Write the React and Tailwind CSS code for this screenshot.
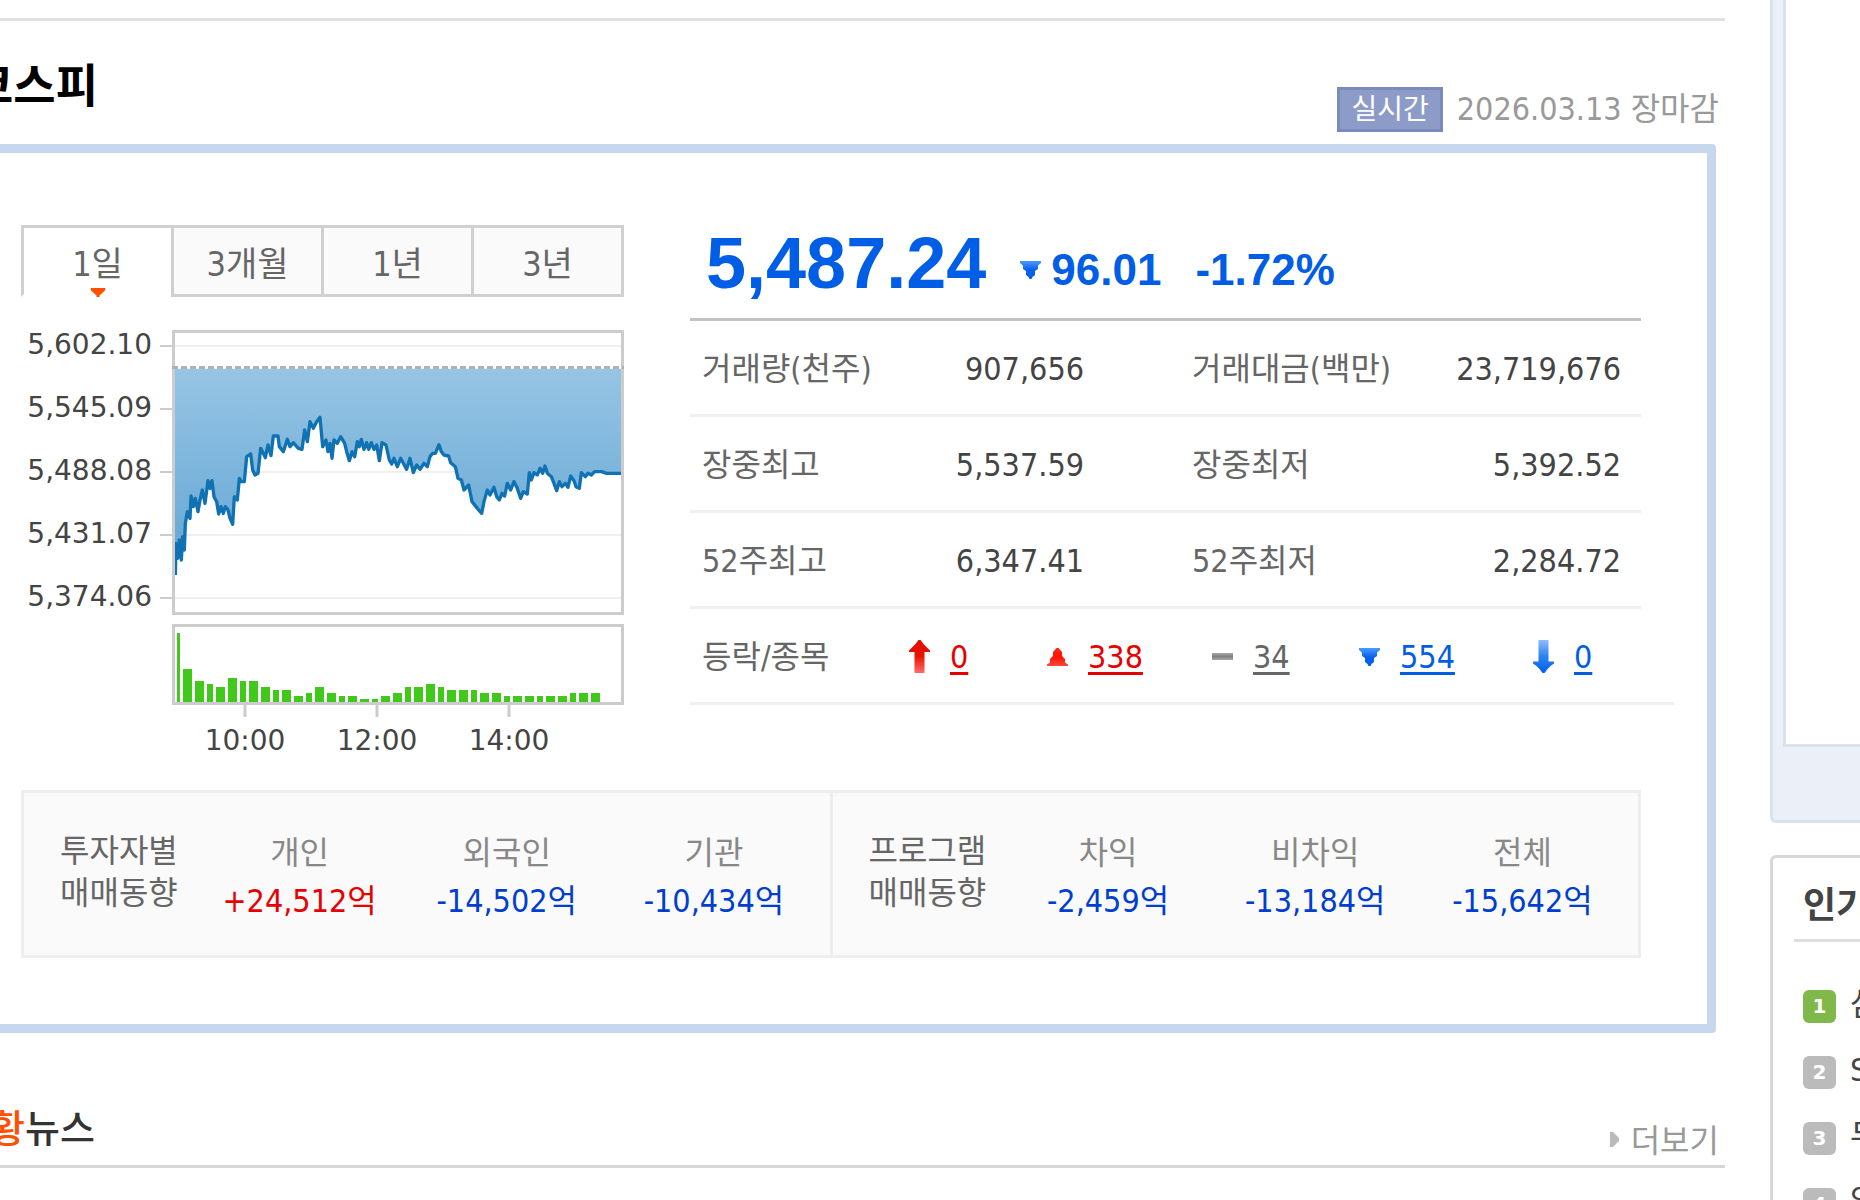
import React from 'react';

const periods = ['1일', '3개월', '1년', '3년'];

const quoteRows = [
  ['거래량(천주)', '907,656', '거래대금(백만)', '23,719,676'],
  ['장중최고', '5,537.59', '장중최저', '5,392.52'],
  ['52주최고', '6,347.41', '52주최저', '2,284.72']
];

const breadth = [
  { id: 'upper', label: '상한', count: '0', color: 'text-[#e60000]' },
  { id: 'up', label: '상승', count: '338', color: 'text-[#e60000]' },
  { id: 'flat', label: '보합', count: '34', color: 'text-[#666666]' },
  { id: 'down', label: '하락', count: '554', color: 'text-[#005de6]' },
  { id: 'lower', label: '하한', count: '0', color: 'text-[#005de6]' }
];

const trends = [
  {
    title: ['투자자별', '매매동향'],
    items: [
      ['개인', '+24,512억'],
      ['외국인', '-14,502억'],
      ['기관', '-10,434억']
    ]
  },
  {
    title: ['프로그램', '매매동향'],
    items: [
      ['차익', '-2,459억'],
      ['비차익', '-13,184억'],
      ['전체', '-15,642억']
    ]
  }
];

const popular = ['삼성전자', 'SK하이닉스', '두산에너빌리티', '알테오젠'];

const yLabels = ['5,602.10', '5,545.09', '5,488.08', '5,431.07', '5,374.06'];
const xLabels = [
  ['10:00', 224],
  ['12:00', 356],
  ['14:00', 488]
];

// Intraday price line, in thirds of a pixel
const line =
  '526,795 528,700 533,745 538,690 544,750 548,680 553,720 556,640 562,605 570,625 573,558 580,590 586,565 594,605 600,570 607,540 615,580 624,512 630,535 636,512 642,560 650,575 656,612 663,590 670,610 676,590 684,600 690,625 698,643 703,560 712,570 718,505 724,515 733,515 740,440 752,432 758,480 765,495 774,490 782,415 790,430 796,443 804,405 813,437 820,378 834,378 838,410 850,425 862,388 870,410 880,398 895,415 906,418 914,360 922,395 930,335 940,355 950,335 960,322 968,410 978,390 984,425 990,400 996,445 1002,390 1012,400 1022,380 1034,400 1040,425 1048,452 1056,425 1064,440 1072,395 1078,410 1084,388 1092,418 1100,398 1106,418 1114,398 1122,418 1130,405 1138,452 1146,398 1158,405 1168,450 1175,462 1182,445 1192,470 1202,445 1210,460 1220,478 1230,445 1240,488 1250,465 1260,478 1272,460 1282,470 1290,440 1298,430 1306,430 1317,404 1324,425 1332,435 1346,438 1352,458 1366,470 1374,505 1384,510 1392,540 1406,525 1416,575 1428,590 1436,600 1445,610 1452,575 1462,540 1470,555 1482,532 1490,560 1498,570 1506,550 1514,558 1522,520 1532,540 1542,515 1550,530 1562,565 1570,545 1582,552 1588,488 1594,510 1602,488 1612,495 1620,475 1628,490 1635,468 1642,490 1654,500 1662,520 1670,542 1678,515 1686,530 1696,520 1704,532 1712,498 1722,512 1728,530 1738,535 1744,488 1756,500 1764,490 1774,495 1784,485 1804,485 1820,490 1864,490';

const volumes = [
  11, 7, 6, 5, 8, 7, 7, 5, 4, 4, 2, 3, 5, 3, 2, 2, 1, 1, 2, 3, 5, 5, 6, 5, 4, 4, 4, 3, 3, 2, 2, 2, 2, 2, 2, 3, 3, 3
];
const barOffset = [0, 12, 24];
const barWidth = [9, 9, 6];

const Mark = ({ type, id }) => {
  const shapes = {
    upper: { h: 33, d: 'M9.500 0h2l3 4 3 3 3.500 3.500V12h-5.500v21h-10V12H0v-1.500L3.500 7l3-3z', from: '#e60a00', mid: '#e81500', to: '#ff6b6b' },
    up: { h: 18, d: 'M9.500 0h2l3.500 4v4l3 3v3.500l3 2V18H0v-1.500l3-2V11l3-3V4z', from: '#ff2a10', mid: '#ff1200', to: '#ff4a40' },
    flat: { h: 7, d: 'M0 0h21v7H0z', from: '#a8a8a8', mid: '#808080', to: '#a8a8a8' },
    down: { h: 18, d: 'M0 0h21v2l-3 2.500V8l-3 2v4l-2.500 2-1 2h-2l-1-2L6 14v-4L3 8V4.500L0 2z', from: '#4a9bff', mid: '#0a60ea', to: '#0060f0' },
    lower: { h: 33, d: 'M5.500 0h10v21.500H21v2L17.500 26l-3 3-3 4h-2l-3-4-3-3L0 23.500v-2h5.500z', from: '#8fbcff', mid: '#2c82f2', to: '#0060ea' }
  };
  const s = shapes[type];

  return (
    <svg viewBox={`0 0 21 ${s.h}`} width="21" height={s.h} aria-hidden="true" className="shrink-0">
      <defs>
        <linearGradient id={id} x1="0" y1="0" x2="0" y2="1">
          <stop offset="0" stopColor={s.from} />
          <stop offset="0.5" stopColor={s.mid} />
          <stop offset="1" stopColor={s.to} />
        </linearGradient>
      </defs>
      <path d={s.d} fill={`url(#${id})`} />
    </svg>
  );
};

const IndexChart = () => (
  <svg viewBox="0 0 603 450" role="img" aria-label="코스피 1일 차트" className="mt-[14px] block w-full">
    <defs>
      <linearGradient id="area" gradientUnits="userSpaceOnUse" x1="0" y1="174" x2="0" y2="795">
        <stop offset="0" stopColor="#97c5e4" />
        <stop offset="1" stopColor="#62a5d4" />
      </linearGradient>
    </defs>

    {/* Price frame and grid */}
    <g fill="none" strokeWidth="2">
      {yLabels.map((label, i) => (
        <g key={label}>
          <path d={`M153 ${35 + i * 63}H601`} stroke="#efefef" />
          <path d={`M139 ${35 + i * 63}H152`} stroke="#cccccc" />
        </g>
      ))}
    </g>
    <g transform="translate(-21 -1) scale(0.33333)">
      <polygon points={`524,176 524,795 ${line} 1866,490 1866,176`} fill="url(#area)" />
      <polyline points={line} fill="none" stroke="#1172b3" strokeWidth="10" strokeLinejoin="round" />
    </g>
    <rect x="152.5" y="20.5" width="449" height="282" fill="none" stroke="#cccccc" strokeWidth="3" />
    <path d="M151 56.500H603" stroke="#b8b0ac" strokeWidth="3" strokeDasharray="6 3" />

    {/* Volume */}
    <rect x="152.5" y="314.5" width="449" height="78" fill="none" stroke="#cccccc" strokeWidth="3" />
    <g fill="#40c81a">
      <rect x="156" y="322" width="3" height="69" />
      {volumes.map((v, i) => (
        <rect
          key={i}
          x={162 + 33 * Math.floor(i / 3) + barOffset[i % 3]}
          y={391 - v * 3}
          width={barWidth[i % 3]}
          height={v * 3}
        />
      ))}
    </g>

    {/* Axis labels */}
    <g fill="#444444" className="font-['DejaVu_Sans',sans-serif] text-[28px]">
      {yLabels.map((label, i) => (
        <text key={label} x="131" y={43 + i * 63} textAnchor="end">{label}</text>
      ))}
      {xLabels.map(([label, x]) => (
        <g key={label}>
          <path d={`M${x} 394v12`} stroke="#cccccc" strokeWidth="3" />
          <text x={x} y="439" textAnchor="middle">{label}</text>
        </g>
      ))}
    </g>
  </svg>
);

const TrendTable = ({ title, items }) => (
  <table className="w-full table-fixed">
    <tbody>
      <tr>
        <th rowSpan={2} scope="rowgroup" className="w-[172px] pl-9 text-left align-top text-[32px] leading-[42px] font-normal text-[#666666]">
          {title[0]}
          <br />
          {title[1]}
        </th>
        {items.map(([name]) => (
          <th key={name} scope="col" className="text-center text-[32px] leading-[46px] font-normal text-[#888888]">{name}</th>
        ))}
      </tr>
      <tr>
        {items.map(([name, value]) => (
          <td
            key={name}
            className={`text-center text-[32px] leading-[50px] ${value.startsWith('+') ? 'text-[#e60000]' : 'text-[#003ed0]'}`}
          >
            {value}
          </td>
        ))}
      </tr>
    </tbody>
  </table>
);

const Quote = () => (
  <div className="min-w-0 flex-1">
    <div className="flex h-24 items-end border-b-3 border-[#c2c2c2] pb-[18px] pl-4 font-['Liberation_Sans',sans-serif] font-bold text-[#005de6]">
      <strong className="text-[72px] leading-[74px]">5,487.24</strong>
      <span className="ml-[34px] flex items-center gap-[10px] pb-[3px] text-[44px] leading-[54px]">
        <Mark type="down" id="mark-change" />
        96.01
      </span>
      <span className="ml-[34px] pb-[3px] text-[44px] leading-[54px]">-1.72%</span>
    </div>

    <table className="w-full table-fixed border-separate border-spacing-0">
      <tbody>
        {quoteRows.map(([a, av, b, bv]) => (
          <tr key={a} className="h-24 *:border-b-3 *:border-[#f0f0f0] *:pt-[2px]">
            <th scope="row" className="w-[210px] pl-3 text-left text-[32px] font-normal text-[#666666]">{a}</th>
            <td className="w-[184px] text-right text-[32px] text-[#444444]">{av}</td>
            <th scope="row" className="w-[340px] pl-[108px] text-left text-[32px] font-normal text-[#666666]">{b}</th>
            <td className="pr-5 text-right text-[32px] text-[#444444]">{bv}</td>
          </tr>
        ))}
      </tbody>
    </table>

    <div className="-mr-[33px] flex h-24 items-center border-b-3 border-[#f0f0f0] pt-[2px] pl-3">
      <span className="w-[207px] shrink-0 text-[32px] text-[#666666]">등락/종목</span>
      <ul className="grid grid-cols-[138px_165px_147px_174px_60px]">
        {breadth.map((item) => (
          <li key={item.id} className="flex items-center gap-5">
            <Mark type={item.id} id={`mark-${item.id}`} />
            <a
              href={`#${item.id}`}
              title={item.label}
              className={`text-[32px] underline decoration-3 underline-offset-4 ${item.color}`}
            >
              {item.count}
            </a>
          </li>
        ))}
      </ul>
    </div>
  </div>
);

const Sidebar = () => (
  <aside className="w-[90px] shrink-0">
    <div className="h-[823px] rounded-bl-md border-b-3 border-l-3 border-[#d9e3ef] bg-[#eaeff8] pl-[10px]">
      <div className="h-[747px] border-b-3 border-l-3 border-[#dbe2ec] bg-white" />
    </div>
    <section className="mt-8 h-[400px] rounded-tl-md border-t-3 border-l-3 border-[#d6d6d6] pl-[21px]">
      <h2 className="h-[84px] overflow-hidden border-b-3 border-[#dedede] pt-6 pl-[9px] text-[36px] leading-[48px] font-bold text-[#444444]">
        인기검색종목
      </h2>
      <ol className="mt-[31px] pl-[9px]">
        {popular.map((name, i) => (
          <li key={name} className="flex h-[66px] items-center gap-[14px]">
            <span
              className={`flex size-[33px] shrink-0 items-center justify-center rounded-md font-['DejaVu_Sans',sans-serif] text-[20px] leading-none font-bold text-white ${
                i === 0 ? 'bg-[#80b84a]' : 'bg-[#bbbbbb]'
              }`}
            >
              {i + 1}
            </span>
            <a href={`#item-${i + 1}`} className="pb-1 text-[32px] leading-[44px] text-[#444444]">{name}</a>
          </li>
        ))}
      </ol>
    </section>
  </aside>
);

const App = () => {
  return (
    <div className="flex h-screen overflow-hidden bg-white font-['DejaVu_Sans_Condensed','Noto_Sans_CJK_KR',sans-serif] whitespace-nowrap">
      <main className="mr-[45px] -ml-[45px] min-w-0 flex-1 pt-[18px]">
        <header className="flex items-end justify-between border-t-3 border-[#e0e0e0] pt-[35px] pr-[6px] pb-3 pl-4">
          <h1 className="mb-4 text-[46px] leading-[60px] font-bold text-black">코스피</h1>
          <div className="flex items-center gap-[14px]">
            <span className="border-3 border-[#7b8aba] bg-[#8d9bc8] px-[11px] text-[28px] leading-[39px] text-white">실시간</span>
            <span className="text-[32px] leading-[45px] text-[#999999]">2026.03.13 장마감</span>
          </div>
        </header>

        <section className="mr-[9px] rounded-sm border-9 border-[#c7d7ed] pt-[72px] pr-[66px] pb-[66px] pl-[57px]">
          <div className="flex gap-[66px]">
            <div className="w-[603px] shrink-0">
              {/* Period tabs */}
              <div role="tablist" className="flex">
                {periods.map((label, i) => (
                  <button
                    key={label}
                    type="button"
                    role="tab"
                    aria-selected={i === 0}
                    className={`relative h-[72px] flex-1 border-t-3 border-b-3 border-l-3 border-[#d0d0d0] pt-[6px] text-[34px] text-[#666666] last:border-r-3 ${
                      i === 0 ? 'border-b-white bg-white' : 'bg-[#fafafa]'
                    }`}
                  >
                    {label}
                    {i === 0 && (
                      <svg viewBox="0 0 15 9" width="15" height="9" aria-hidden="true" className="absolute -bottom-[3px] left-1/2 -translate-x-1/2">
                        <path d="M0 0h15v2L9 7.500V9H6V7.500L0 2z" fill="#ff5000" />
                      </svg>
                    )}
                  </button>
                ))}
              </div>
              <IndexChart />
            </div>
            <Quote />
          </div>

          {/* Investor and program trading */}
          <div className="mt-[29px] flex border-3 border-[#eeeeee] bg-[#fafafa]">
            {trends.map((trend) => (
              <div key={trend.title[0]} className="h-[162px] flex-1 border-[#eeeeee] pt-[37px] pr-3 first:border-r-3">
                <TrendTable title={trend.title} items={trend.items} />
              </div>
            ))}
          </div>
        </section>

        <section className="mt-[66px] flex items-end justify-between border-b-3 border-[#d6d6d6] pr-[6px]">
          <h2 className="mb-[6px] text-[38px] leading-[60px] font-medium text-[#333333]">
            <span className="text-[#ff5000]">시황</span>뉴스
          </h2>
          <a href="#more" className="mb-1 flex items-center gap-3 text-[32px] leading-[40px] text-[#999999]">
            <svg viewBox="0 0 9 15" width="9" height="15" aria-hidden="true" className="mb-1">
              <path d="M0 0h3l6 6v3l-6 6H0z" fill="#bbbbbb" />
            </svg>
            더보기
          </a>
        </section>
      </main>

      <Sidebar />
    </div>
  );
};

export default App;
